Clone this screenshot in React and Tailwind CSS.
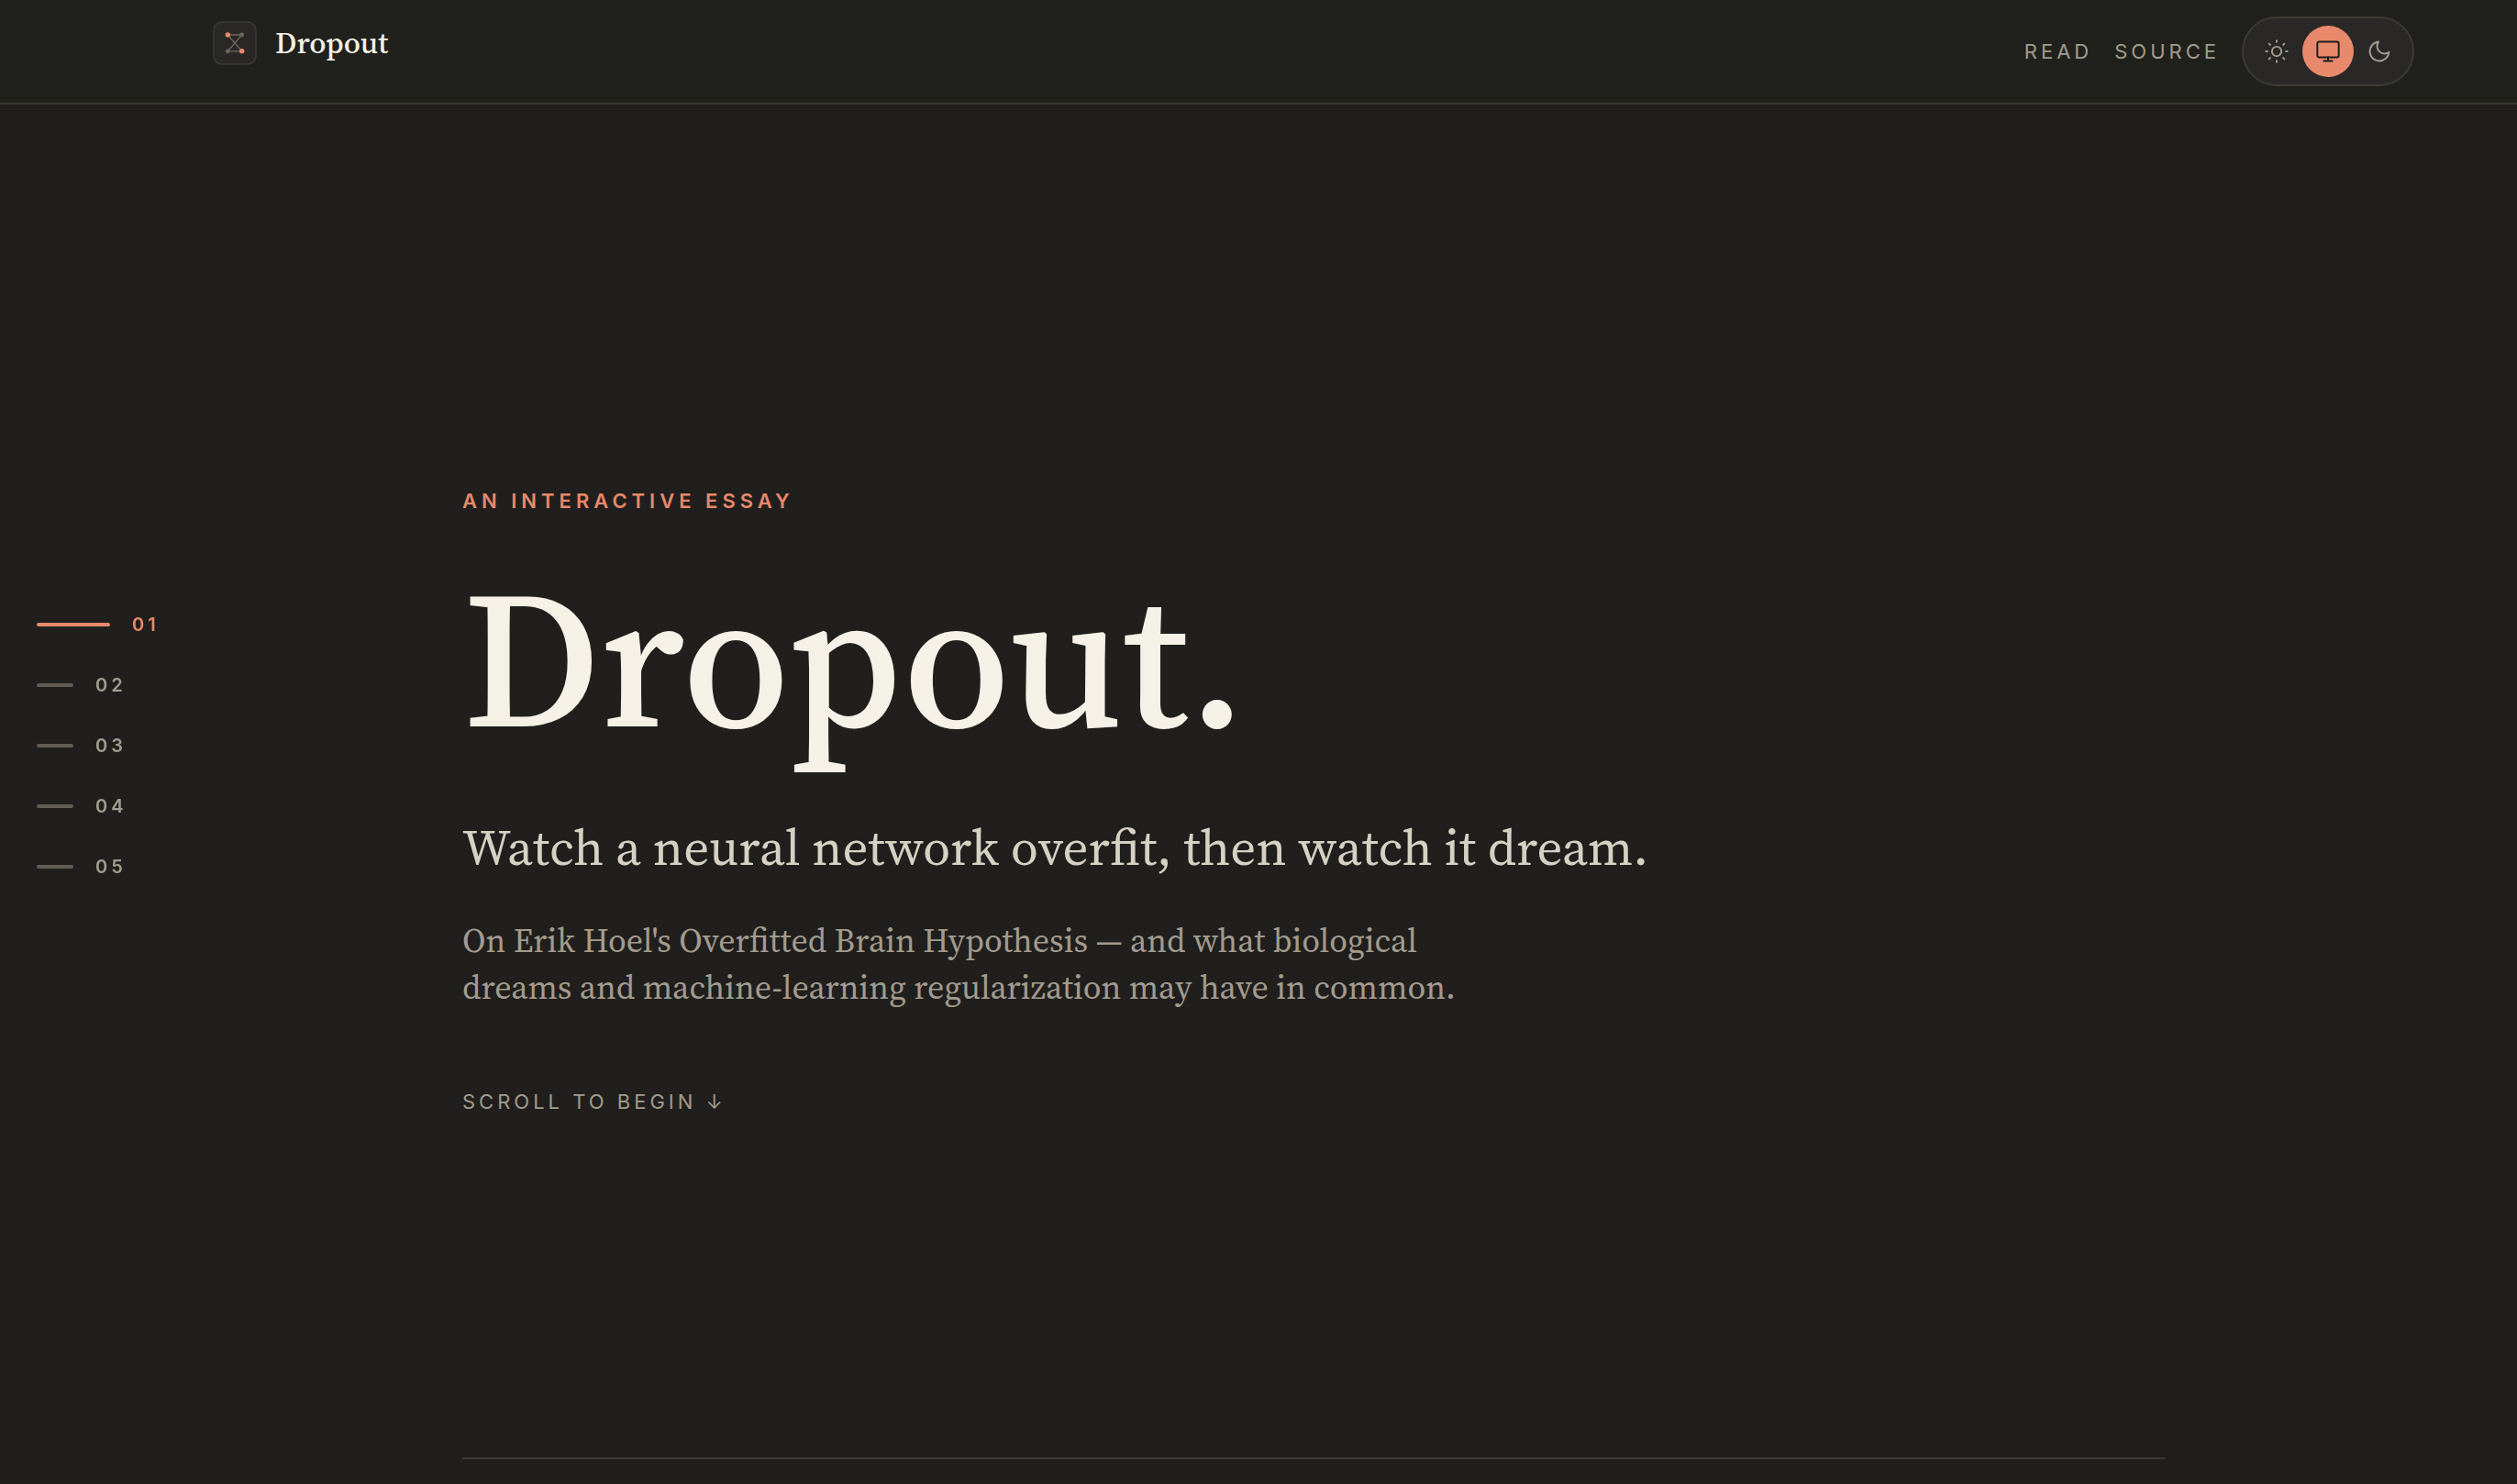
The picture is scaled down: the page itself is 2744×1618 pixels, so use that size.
const chapters = ["01", "02", "03", "04", "05"];

function Glyph({ children }) {
  return (
    <svg
      viewBox="0 0 24 24"
      className="size-7"
      fill="none"
      stroke="currentColor"
      strokeWidth="1.7"
      strokeLinecap="round"
      strokeLinejoin="round"
      aria-hidden="true"
    >
      {children}
    </svg>
  );
}

function SunIcon() {
  return (
    <Glyph>
      <circle cx="12" cy="12" r="4.4" />
      <path d="M12 2v1.3M12 20.7V22M2 12h1.3M20.7 12H22M4.9 4.9l1 1M18.1 18.1l1 1M4.9 19.1l1-1M18.1 5.9l1-1" />
    </Glyph>
  );
}

function MonitorIcon() {
  return (
    <Glyph>
      <rect x="2" y="3" width="20" height="14.5" rx="1.6" />
      <path d="M12 17.5V21M8 21h8" />
    </Glyph>
  );
}

function MoonIcon() {
  return (
    <Glyph>
      <path d="M21 12.79A9 9 0 1 1 11.21 3 7 7 0 0 0 21 12.79z" />
    </Glyph>
  );
}

const themes = [
  { name: "Light", Icon: SunIcon },
  { name: "System", Icon: MonitorIcon },
  { name: "Dark", Icon: MoonIcon },
];

function Logo() {
  return (
    <svg viewBox="0 0 48 48" className="size-12" fill="none" aria-hidden="true">
      <rect x="1" y="1" width="46" height="46" rx="9" fill="#2a2826" stroke="#3d3a36" strokeWidth="1.5" />
      <path
        d="M16.3 15h15.4M16.3 32.8h15.4M16.3 15l15.4 17.8M31.7 15 16.3 32.8"
        stroke="#6e685e"
        strokeWidth="1.3"
      />
      <circle cx="31.7" cy="15" r="2.4" fill="#6e685e" />
      <circle cx="16.3" cy="32.8" r="2.4" fill="#6e685e" />
      <circle cx="16.3" cy="15" r="2.7" fill="#e8896b" />
      <circle cx="31.7" cy="32.8" r="2.7" fill="#e8896b" />
    </svg>
  );
}

function ThemeToggle({ active }) {
  return (
    <div
      role="group"
      aria-label="Theme"
      className="flex rounded-full border-2 border-[#3d3a36] bg-[#2a2826] p-2"
    >
      {themes.map(({ name, Icon }) => (
        <button
          key={name}
          type="button"
          aria-label={name}
          aria-pressed={name === active}
          className={
            name === active
              ? "flex size-14 items-center justify-center rounded-full bg-[#e8896b] text-[#201f1d]"
              : "flex size-14 items-center justify-center rounded-full text-[#a39b8d]"
          }
        >
          <Icon />
        </button>
      ))}
    </div>
  );
}

function Header() {
  return (
    <header className="flex items-start justify-between border-b-2 border-[#3c3a34] bg-[#20211c] py-[18px] pr-28 pl-[232px]">
      <a href="#top" className="flex items-center gap-5 pt-[5px]">
        <Logo />
        <span className="font-['Source_Serif_4',serif] text-[33px] leading-12 font-medium text-[#f5f1e6]">
          Dropout
        </span>
      </a>
      <nav className="flex items-center gap-6 text-[22px] leading-8 tracking-[4px] text-[#a39b8d]">
        <a href="#read">READ</a>
        <a href="#source">SOURCE</a>
        <ThemeToggle active="System" />
      </nav>
    </header>
  );
}

function ChapterRail({ current }) {
  return (
    <nav
      aria-label="Chapters"
      className="fixed inset-y-0 left-0 flex flex-col justify-center gap-[42px] pt-2 pl-10 text-xl leading-6 font-semibold tracking-[4px]"
    >
      {chapters.map((n) => (
        <a
          key={n}
          href={"#chapter-" + n}
          className={
            n === current
              ? "flex items-center gap-6 text-[#e8896b]"
              : "flex items-center gap-6 text-[#a39b8d]"
          }
        >
          <span
            className={
              n === current
                ? "h-1 w-20 rounded-full bg-[#e8896b]"
                : "h-1 w-10 rounded-full bg-[#625c53]"
            }
          />
          {n}
        </a>
      ))}
    </nav>
  );
}

export default function App() {
  return (
    <div id="top" className="flex min-h-screen flex-col bg-[#201f1d] font-[Inter,sans-serif]">
      <Header />
      <ChapterRail current="01" />
      <main className="flex flex-1 flex-col pb-[27px] pl-[120px]">
        <section className="mx-auto flex w-full max-w-[1856px] flex-1 flex-col items-start justify-center border-b-2 border-[#3c3a34] pt-11">
          <p className="text-[22px] leading-8 font-semibold tracking-[5px] text-[#e8896b]">
            AN INTERACTIVE ESSAY
          </p>
          <h1 className="mt-[50px] font-['Source_Serif_4',serif] text-[212px] leading-none font-medium text-[#f5f1e6]">
            Dropout.
          </h1>
          <p className="mt-16 font-['Source_Serif_4',serif] text-[55px] leading-[72px] text-[#d6d1c3]">
            Watch a neural network overfit, then watch it dream.
          </p>
          <p className="mt-10 max-w-[1120px] font-['Source_Serif_4',serif] text-4xl leading-[51px] text-[#a39b8d]">
            On Erik Hoel's Overfitted Brain Hypothesis — and what biological
            dreams and machine-learning regularization may have in common.
          </p>
          <a
            href="#chapter-01"
            className="mt-[83px] text-[22px] leading-8 tracking-[4px] text-[#a39b8d]"
          >
            SCROLL TO BEGIN ↓
          </a>
        </section>
      </main>
    </div>
  );
}
